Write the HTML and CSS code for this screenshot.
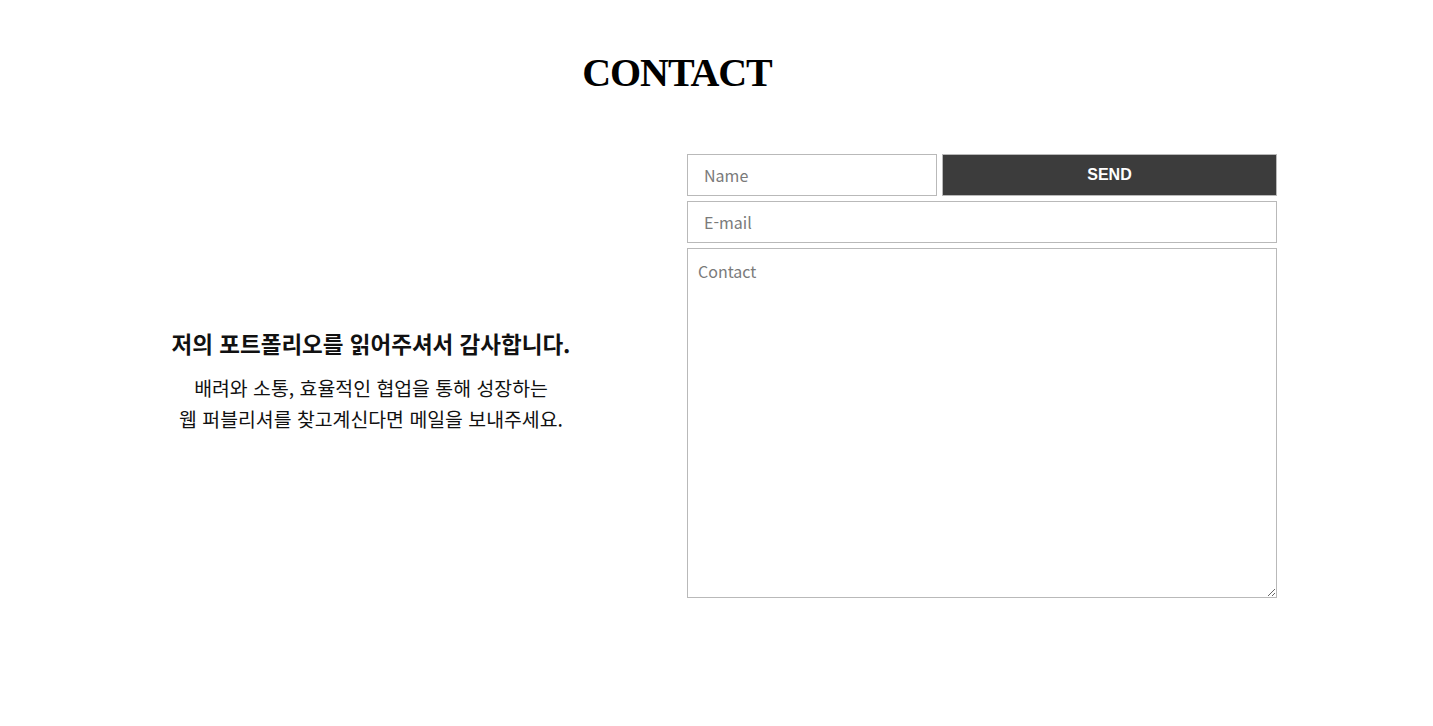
FILE: index.html
```html
<!DOCTYPE html>
<html lang="ko">
<head>
<meta charset="utf-8">
<title>Contact</title>
<link rel="stylesheet" href="styles.css">
</head>
<body>
<section class="contact">
  <h2 class="contact-title">CONTACT</h2>
  <div class="contact-row">
    <div class="contact-intro">
      <h3 class="intro-heading">저의 포트폴리오를 읽어주셔서 감사합니다.</h3>
      <p class="intro-text">배려와 소통, 효율적인 협업을 통해 성장하는<br>웹 퍼블리셔를 찾고계신다면 메일을 보내주세요.</p>
    </div>
    <form class="contact-form">
      <div class="form-top">
        <input class="field field-name" type="text" placeholder="Name">
        <button class="send-btn" type="button">SEND</button>
      </div>
      <input class="field" type="email" placeholder="E-mail">
      <textarea class="field field-message" placeholder="Contact"></textarea>
    </form>
  </div>
</section>
</body>
</html>
```
FILE: styles.css
```css
* { box-sizing: border-box; }
html, body { margin: 0; padding: 0; background: #fff; }
body {
  font-family: "Noto Sans CJK KR", "Noto Sans", sans-serif;
  color: #111;
}
.contact {
  width: 1180px;
  margin-left: 97px;
  padding-top: 49px;
}
.contact-title {
  margin: 0 20px 0 0;
  text-align: center;
  font-family: "Liberation Serif", "Times New Roman", serif;
  font-weight: bold;
  font-size: 40px;
  line-height: 47px;
  letter-spacing: -1.1px;
  color: #000;
}
.contact-row {
  display: flex;
  align-items: center;
  gap: 42px;
  margin-top: 58px;
}
.contact-intro {
  width: 548px;
  text-align: center;
  padding-top: 10px;
}
.intro-heading {
  margin: 0;
  font-size: 22.5px;
  font-weight: 700;
  line-height: 30px;
  color: #111;
}
.intro-text {
  margin: 14px 0 0;
  font-size: 19.4px;
  line-height: 31px;
  color: #111;
}
.contact-form {
  width: 590px;
  display: flex;
  flex-direction: column;
  gap: 5px;
}
.form-top {
  display: flex;
  gap: 5px;
}
.field {
  display: block;
  width: 100%;
  height: 42px;
  border: 1px solid #b9b9b9;
  border-radius: 0;
  padding: 0 16px;
  font-family: "Noto Sans CJK KR", "Noto Sans", sans-serif;
  font-size: 16px;
  color: #333;
  background: #fff;
  outline: none;
}
.field::placeholder { color: #7a7a7a; }
.field-name { width: 250px; flex: none; }
.send-btn {
  flex: 1;
  height: 42px;
  border: 1px solid #b9b9b9;
  background: #3c3c3c;
  color: #fff;
  font-family: "Liberation Sans", Arial, sans-serif;
  font-weight: bold;
  font-size: 16px;
  padding: 0;
  cursor: pointer;
}
.field-message {
  height: 350px;
  padding: 10px 10px;
  line-height: 24px;
  resize: vertical;
}
```
